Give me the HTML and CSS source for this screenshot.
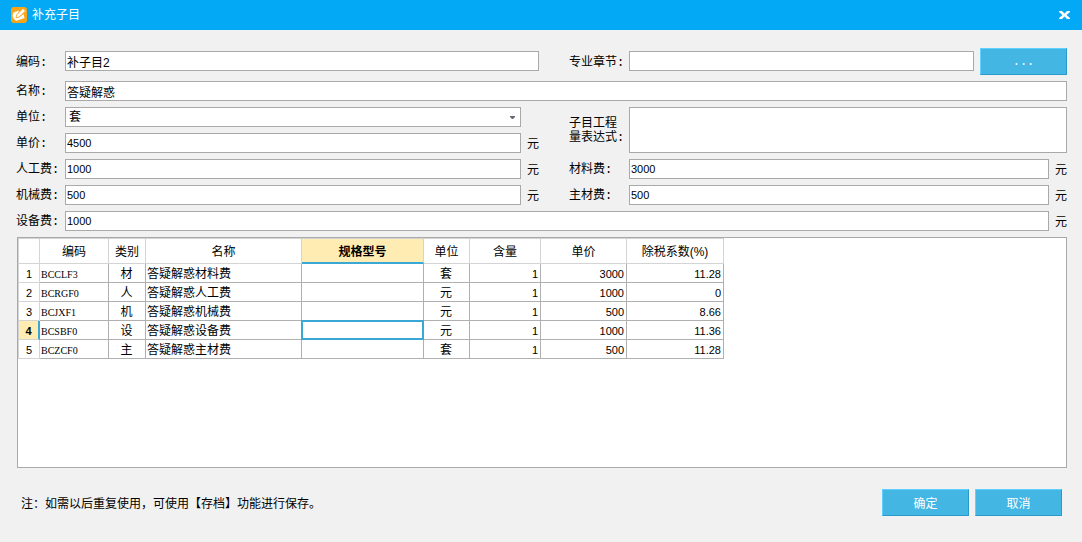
FILE: index.html
```
<!DOCTYPE html>
<html lang="zh-CN">
<head>
<meta charset="utf-8">
<title>补充子目</title>
<link rel="stylesheet" href="styles.css">
</head>
<body>
<header class="titlebar">
  <svg class="app-icon" viewBox="0 0 16 16" aria-hidden="true">
    <rect width="16" height="16" rx="3" fill="#f9a51a"/>
    <path d="M2.500 5.500 8 3.500 7 6 5 8.500V11l3-.5L12.500 7l1 4-8.500 3-2.500-2.500-1-3z" fill="#fff"/>
    <path d="M12 1.500 14.500 4 8 10l-3 .8.7-3z" fill="#fff" stroke="#f9a51a" stroke-width=".7"/>
  </svg>
  <h1 class="title">补充子目</h1>
  <button class="close" type="button" aria-label="关闭">
    <svg class="close-icon" viewBox="0 0 11 8" aria-hidden="true"><path d="M0 0h3l2.500 2.500L8 0h3v1L7.500 4 11 7v1H8L5.500 5.500 3 8H0V7l3.500-3L0 1z" fill="#fff"/></svg>
  </button>
</header>
<main class="dialog">
  <form class="form">
    <label class="label raised" for="code">编码:</label>
    <input class="field raised span-unit" id="code" value="补子目2">
    <label class="label right raised" for="chapter">专业章节:</label>
    <div class="chapter">
      <input class="field raised" id="chapter">
      <button class="button dots" type="button" aria-label="选择专业章节">...</button>
    </div>

    <label class="label" for="name">名称:</label>
    <input class="field span-all" id="name" value="答疑解惑">

    <label class="label" for="unit">单位:</label>
    <div class="select-box">
      <select class="field select" id="unit"><option>套</option></select>
      <svg class="arrow" viewBox="0 0 5 3" aria-hidden="true"><path d="M0 0h5v1L3 3H2L0 1z" fill="#666a78"/></svg>
    </div>
    <label class="label right tall" for="expr">子目工程<br>量表达式:</label>
    <textarea class="field expr" id="expr"></textarea>

    <label class="label" for="price">单价:</label>
    <input class="field" id="price" value="4500">
    <span class="unit">元</span>

    <label class="label" for="labor">人工费:</label>
    <input class="field" id="labor" value="1000">
    <span class="unit">元</span>
    <label class="label right" for="material">材料费:</label>
    <input class="field" id="material" value="3000">
    <span class="unit">元</span>

    <label class="label" for="machine">机械费:</label>
    <input class="field" id="machine" value="500">
    <span class="unit">元</span>
    <label class="label right" for="main-material">主材费:</label>
    <input class="field" id="main-material" value="500">
    <span class="unit">元</span>

    <label class="label" for="equipment">设备费:</label>
    <input class="field span-wide" id="equipment" value="1000">
    <span class="unit">元</span>
  </form>

  <section class="sheet">
    <table class="grid">
      <colgroup>
        <col class="c-index"><col class="c-code"><col class="c-kind"><col class="c-name"><col class="c-spec"><col class="c-unit"><col class="c-qty"><col class="c-price"><col class="c-tax">
      </colgroup>
      <thead>
        <tr><th></th><th>编码</th><th>类别</th><th>名称</th><th class="active-col">规格型号</th><th>单位</th><th>含量</th><th>单价</th><th>除税系数(%)</th></tr>
      </thead>
      <tbody>
        <tr><th>1</th><td class="code">BCCLF3</td><td class="center">材</td><td>答疑解惑材料费</td><td></td><td class="center">套</td><td class="num">1</td><td class="num">3000</td><td class="num">11.28</td></tr>
        <tr><th>2</th><td class="code">BCRGF0</td><td class="center">人</td><td>答疑解惑人工费</td><td></td><td class="center">元</td><td class="num">1</td><td class="num">1000</td><td class="num">0</td></tr>
        <tr><th>3</th><td class="code">BCJXF1</td><td class="center">机</td><td>答疑解惑机械费</td><td></td><td class="center">元</td><td class="num">1</td><td class="num">500</td><td class="num">8.66</td></tr>
        <tr><th class="active-row">4</th><td class="code">BCSBF0</td><td class="center">设</td><td>答疑解惑设备费</td><td class="active-cell"></td><td class="center">元</td><td class="num">1</td><td class="num">1000</td><td class="num">11.36</td></tr>
        <tr><th>5</th><td class="code">BCZCF0</td><td class="center">主</td><td>答疑解惑主材费</td><td></td><td class="center">套</td><td class="num">1</td><td class="num">500</td><td class="num">11.28</td></tr>
      </tbody>
    </table>
  </section>

  <footer class="footer">
    <p class="note">注：如需以后重复使用，可使用【存档】功能进行保存。</p>
    <button class="button" type="button">确定</button>
    <button class="button" type="button">取消</button>
  </footer>
</main>
</body>
</html>
```
FILE: styles.css
```
* { box-sizing: border-box; }

body {
  margin: 0;
  min-height: 100vh;
  display: flex;
  flex-direction: column;
  background: #f1f1f1;
  color: #000;
  font: 12px/14px "Liberation Sans", "Noto Sans CJK SC", sans-serif;
}

.titlebar {
  display: flex;
  align-items: center;
  height: 30px;
  padding: 0 12px 0 11px;
  background: #03a9f4;
  color: #fff;
}
.app-icon { width: 16px; height: 16px; margin-right: 5px; }
.title { margin: 0; flex: 1; font-size: 12px; font-weight: 400; }
.close { display: flex; padding: 0; border: 0; background: none; }
.close-icon { width: 11px; height: 8px; }

.dialog {
  flex: 1;
  display: flex;
  flex-direction: column;
  padding: 18px 15px 26px 16px;
}

.form {
  display: grid;
  grid-template-columns: 49px minmax(0, 456fr) 18px 90px minmax(0, 420fr) 18px;
  grid-template-rows: 27px;
  grid-auto-rows: 20px;
  row-gap: 6px;
  align-items: center;
}
.label {
  grid-column: 1;
  padding-top: 2px;
  font-family: "Liberation Mono", "Noto Sans CJK SC", monospace;
  white-space: nowrap;
}
.right { grid-column: 4; padding-left: 30px; }
.unit { padding-top: 2px; text-align: right; }
.field {
  width: 100%;
  min-width: 0;
  height: 20px;
  padding: 0 1px;
  border: 1px solid #a9a9a9;
  border-radius: 0;
  background: #fff;
  color: #000;
  font: 11px "Liberation Sans", "Noto Sans CJK SC", sans-serif;
  outline: 0;
}
#code, #name, .select { font-size: 12px; }
.raised { align-self: end; margin-bottom: 4px; }
.label.raised { margin-bottom: 5px; }
.span-unit { grid-column: 2 / 4; }
.span-all { grid-column: 2 / -1; }
.span-wide { grid-column: 2 / 6; }
.chapter { grid-column: 5 / -1; display: flex; gap: 6px; }
.select-box { position: relative; height: 20px; }
.select { appearance: none; padding: 0 3px; }
.arrow { position: absolute; right: 6px; top: 9px; width: 5px; height: 3px; }
.tall { grid-row: 3 / 5; }
.expr { grid-area: 3 / 5 / 5 / -1; height: 46px; resize: none; }

.button {
  flex: none;
  width: 87px;
  height: 27px;
  padding: 0;
  border: 1px solid;
  border-color: #5fd0ff #2b9acb #2b9acb #5fd0ff;
  background: #44b6e4;
  color: #fff;
  font: 12px "Liberation Sans", "Noto Sans CJK SC", sans-serif;
}
.dots { font: 12px "Liberation Mono", monospace; }

.sheet {
  flex: 1;
  margin: 6px 0 21px 1px;
  border: 1px solid #a9a9a9;
  background: #fff;
  overflow: auto;
}
.grid { width: 706px; table-layout: fixed; border-collapse: separate; border-spacing: 0; }
.c-index { width: 22px; }
.c-code { width: 69px; }
.c-kind { width: 37px; }
.c-name { width: 156px; }
.c-spec { width: 122px; }
.c-unit { width: 46px; }
.c-qty { width: 71px; }
.c-price { width: 86px; }
.c-tax { width: 97px; }
.grid th, .grid td {
  height: 19px;
  padding: 2px 2px 0 1px;
  border: solid #b0b0b0;
  border-width: 0 1px 1px 0;
  text-align: left;
  white-space: nowrap;
}
.grid th { padding: 2px 0 0; border-color: #d4d4d4; font-weight: 400; text-align: center; }
.grid thead th { height: 26px; border-top-width: 1px; }
.grid th:first-child { border-left-width: 1px; }
.grid tbody th { font-size: 11px; }
.grid .code { font: 10px "Liberation Serif", serif; }
.grid .center { text-align: center; }
.grid .num { font-size: 11px; text-align: right; }
.grid thead .active-col { background: #ffecb3; border-bottom: 2px solid #3aa8d4; font-weight: 700; }
.grid .active-row { background: #ffecb3; border-right: 2px solid #3aa8d4; font-weight: 700; }
.grid .active-cell {
  border-color: #3aa8d4;
  box-shadow: inset 0 0 0 1px #3aa8d4, -1px 0 #3aa8d4, 0 -1px #3aa8d4, -1px -1px #3aa8d4;
}

.footer { display: flex; align-items: center; gap: 6px; padding: 0 5px; }
.note { flex: 1; margin: 0; padding-top: 2px; }
```
